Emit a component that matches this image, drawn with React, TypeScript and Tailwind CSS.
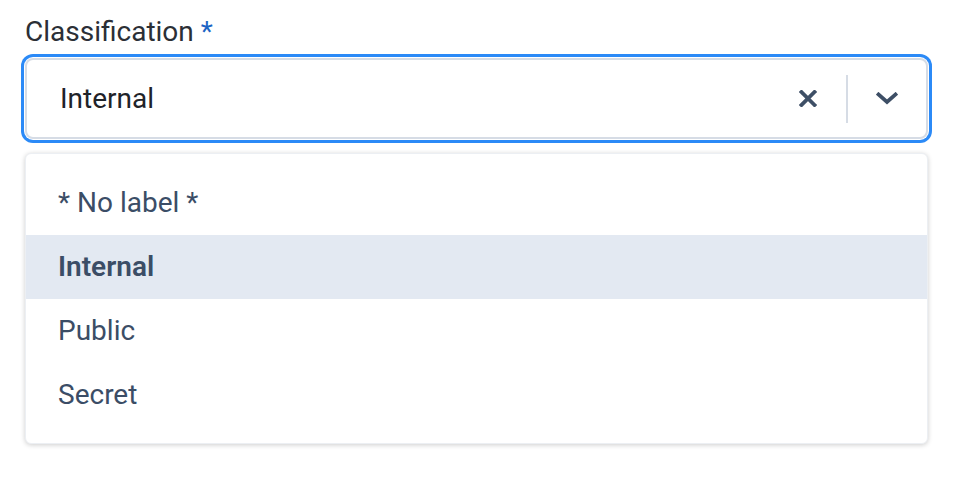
import React from 'react';

const OPTIONS = ['* No label *', 'Internal', 'Public', 'Secret'];

export default function App() {
  const selected = 'Internal';

  return (
    <div className="min-h-screen w-full bg-white px-[25px] pt-[15px] font-['Roboto',sans-serif]">
      {/* Label */}
      <label className="block text-[28px] leading-[34px] text-[#2b2f36]">
        Classification <span className="text-[#1c64c4]">*</span>
      </label>

      {/* Select control */}
      <div className="mt-[9px] flex h-[81px] items-center rounded-[8px] border-2 border-[#d6dce5] bg-white shadow-[0_0_0_1px_#ffffff,0_0_0_4px_#2b8af7]">
        <span className="flex-1 pl-[33px] text-[28px] leading-[34px] text-[#1f2329]">{selected}</span>
        <button className="flex h-full w-[76px] items-center justify-center" title="Clear">
          <svg width="18" height="17" viewBox="0 0 18 17" fill="none">
            <path d="M2.5 2 L15.5 15 M15.5 2 L2.5 15" stroke="#3e4f66" strokeWidth="3.8" strokeLinecap="square" />
          </svg>
        </button>
        <div className="h-[48px] w-[2px] bg-[#d6dce5]" />
        <button className="flex h-full w-[78px] items-center justify-center" title="Open">
          <svg width="22" height="13" viewBox="0 0 22 13" fill="none">
            <path d="M2.5 2.5 L11 10 L19.5 2.5" stroke="#3e4f66" strokeWidth="3.8" strokeLinecap="square" />
          </svg>
        </button>
      </div>

      {/* Dropdown menu */}
      <div className="mt-[14px] rounded-[6px] border border-[#eceff3] bg-white pt-[17px] pb-[16px] shadow-[0_1px_5px_rgba(0,0,0,0.2)]">
        {OPTIONS.map((opt) => (
          <div
            key={opt}
            className={
              opt === selected
                ? 'flex h-[64px] items-center bg-[#e3e9f2] pl-[32px] text-[28px] font-semibold text-[#3b4d66]'
                : 'flex h-[64px] items-center pl-[32px] text-[28px] text-[#3b4d66]'
            }
          >
            {opt}
          </div>
        ))}
      </div>
    </div>
  );
}
